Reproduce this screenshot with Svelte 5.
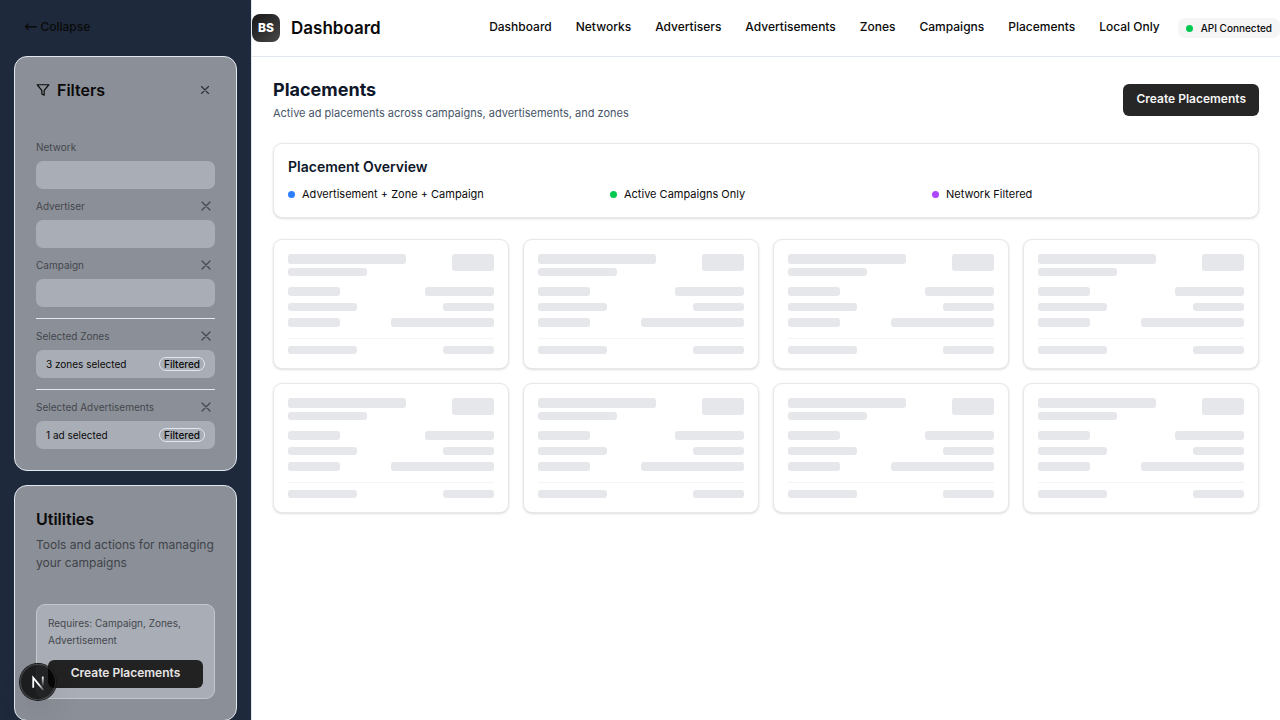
<script>
  const links = ['Dashboard', 'Networks', 'Advertisers', 'Advertisements', 'Zones', 'Campaigns', 'Placements', 'Local Only'];
  const filters = [
    { id: 'network', label: 'Network', clearable: false },
    { id: 'advertiser', label: 'Advertiser', clearable: true },
    { id: 'campaign', label: 'Campaign', clearable: true }
  ];
  const selections = [
    { label: 'Selected Zones', text: '3 zones selected' },
    { label: 'Selected Advertisements', text: '1 ad selected' }
  ];
  const overview = [
    { text: 'Advertisement + Zone + Campaign', tone: 'blue' },
    { text: 'Active Campaigns Only', tone: 'green' },
    { text: 'Network Filtered', tone: 'purple' }
  ];
  const placeholders = Array.from({ length: 8 }, (_, i) => i);
</script>

{#snippet cross()}
  <svg class="cross" viewBox="0 0 24 24" aria-hidden="true"><path d="M18 6 6 18M6 6l12 12" /></svg>
{/snippet}

<div class="shell">
  <aside>
    <button class="collapse"><span class="arrow">←</span>Collapse</button>

    <section class="panel">
      <div class="panel-head">
        <svg class="funnel" viewBox="0 0 24 24" aria-hidden="true"><path d="M22 3H2l8 9.46V19l4 2v-8.54L22 3z" /></svg>
        <h2>Filters</h2>
        <button class="icon-btn" aria-label="Clear all filters">{@render cross()}</button>
      </div>
      {#each filters as f}
        <div class="field">
          <div class="label-row">
            <label for={f.id}>{f.label}</label>
            {#if f.clearable}
              <button class="icon-btn" aria-label={'Clear ' + f.label}>{@render cross()}</button>
            {/if}
          </div>
          <select id={f.id}></select>
        </div>
      {/each}
      {#each selections as s}
        <div class="selection">
          <div class="label-row">
            <span>{s.label}</span>
            <button class="icon-btn" aria-label={'Clear ' + s.label}>{@render cross()}</button>
          </div>
          <div class="chosen">
            <span>{s.text}</span>
            <span class="tag">Filtered</span>
          </div>
        </div>
      {/each}
    </section>

    <section class="panel utilities">
      <h2>Utilities</h2>
      <p class="lead">Tools and actions for managing your campaigns</p>
      <div class="tool">
        <p>Requires: Campaign, Zones, Advertisement</p>
        <button class="primary small">Create Placements</button>
      </div>
    </section>
  </aside>

  <div class="page">
    <header>
      <div class="brand">
        <span class="logo">BS</span>
        <span class="name">Dashboard</span>
      </div>
      <div class="right">
        <nav>
          {#each links as link}
            <a href="#top">{link}</a>
          {/each}
        </nav>
        <span class="status"><i class="dot green"></i>API Connected</span>
      </div>
    </header>

    <main>
      <div class="title-row">
        <div>
          <h1>Placements</h1>
          <p>Active ad placements across campaigns, advertisements, and zones</p>
        </div>
        <button class="primary">Create Placements</button>
      </div>

      <section class="card">
        <h3>Placement Overview</h3>
        <ul>
          {#each overview as o}
            <li><i class="dot {o.tone}"></i>{o.text}</li>
          {/each}
        </ul>
      </section>

      <div class="grid">
        {#each placeholders as p (p)}
          <div class="card">
            <div class="top">
              <div class="headings">
                <i class="bar tall w75"></i>
                <i class="bar short w50"></i>
              </div>
              <i class="bar badge"></i>
            </div>
            <div class="rows">
              <div><i class="bar w25"></i><i class="bar w33"></i></div>
              <div><i class="bar short w33"></i><i class="bar short w25"></i></div>
              <div><i class="bar w25"></i><i class="bar w50"></i></div>
            </div>
            <div class="foot"><i class="bar short w33"></i><i class="bar short w25"></i></div>
          </div>
        {/each}
      </div>
    </main>
  </div>

  <button class="dev" aria-label="Open developer tools">
    <svg viewBox="0 0 40 40" aria-hidden="true">
      <defs>
        <linearGradient id="diag" x1="22" y1="22" x2="27" y2="29" gradientUnits="userSpaceOnUse">
          <stop stop-color="#fff" /><stop offset="1" stop-color="#fff" stop-opacity="0.1" />
        </linearGradient>
        <linearGradient id="stem" x1="25" y1="14" x2="25" y2="25" gradientUnits="userSpaceOnUse">
          <stop stop-color="#fff" /><stop offset="1" stop-color="#fff" stop-opacity="0" />
        </linearGradient>
      </defs>
      <path d="M14.700 26.500V15.200L26 29" fill="none" stroke="url(#diag)" stroke-width="2" />
      <path d="M25.300 14V24.500" fill="none" stroke="url(#stem)" stroke-width="2" />
    </svg>
  </button>
</div>

<style>
  :global(body) {
    margin: 0;
    background: #fff;
    color: #0a0a0a;
    font-family: Inter, "Liberation Sans", sans-serif;
  }
  * { box-sizing: border-box; }
  h1, h2, h3, p, ul { margin: 0; padding: 0; }
  button { font: inherit; color: inherit; border: 0; background: none; padding: 0; cursor: pointer; }

  .shell { display: flex; height: 100vh; overflow: hidden; }

  aside {
    flex: 0 0 252px;
    padding: 14px;
    background: #1e293b;
    border-right: 1px solid #e2e8f0;
    overflow: hidden;
  }
  .collapse {
    display: flex;
    align-items: center;
    gap: 3px;
    height: 28px;
    margin-bottom: 14px;
    padding: 0 10px 2px;
    font-size: 12px;
    line-height: 16px;
    font-weight: 500;
    color: #0a0a0a;
  }
  .arrow { font-family: "DejaVu Sans", sans-serif; font-size: 16px; font-weight: 400; }
  .panel {
    padding: 21px;
    border: 1px solid #e2e8f0;
    border-radius: 13px;
    background: #8b8f97;
  }
  .panel h2 { font-size: 16px; line-height: 24px; font-weight: 600; }
  .panel-head { display: flex; align-items: center; height: 24px; margin-bottom: 36px; gap: 7px; }
  .panel-head .icon-btn { margin-left: auto; width: 21px; }
  .funnel { width: 14px; height: 14px; }
  .funnel, .cross { fill: none; stroke: currentColor; stroke-width: 2; stroke-linecap: round; stroke-linejoin: round; }
  .cross { width: 14px; height: 14px; }
  .label-row .cross { width: 16px; height: 16px; stroke-width: 1.8; }
  .icon-btn { display: flex; align-items: center; justify-content: center; width: 18px; height: 18px; color: #2c3036; }
  .label-row .icon-btn { color: #43474e; }
  .field + .field { margin-top: 8px; }
  .label-row {
    display: flex;
    align-items: center;
    justify-content: space-between;
    height: 18px;
    margin-bottom: 5px;
    font-size: 10px;
    color: #43474e;
  }
  select {
    display: block;
    width: 100%;
    height: 28px;
    border: 0;
    border-radius: 7px;
    background: #a9adb5;
    appearance: none;
  }
  .selection { margin-top: 11px; padding-top: 8px; border-top: 1px solid #e2e8f0; }
  .chosen {
    display: flex;
    align-items: center;
    justify-content: space-between;
    height: 28px;
    padding: 0 10px;
    border-radius: 7px;
    background: #a9adb5;
    font-size: 10px;
  }
  .tag {
    height: 14px;
    padding: 0 4px;
    border: 1px solid #e2e8f0;
    border-radius: 7px;
    line-height: 12px;
    font-weight: 500;
  }
  .utilities { margin-top: 14px; }
  .lead { margin-top: 5px; font-size: 12px; line-height: 18px; color: #3f434a; }
  .tool {
    margin-top: 32px;
    padding: 10px 11px;
    border: 1px solid #c3c7cd;
    border-radius: 9px;
    background: #a9adb5;
  }
  .tool p { margin-bottom: 11px; font-size: 10px; line-height: 17px; color: #43474e; }

  .primary {
    height: 32px;
    padding: 0 13px 3px;
    border-radius: 6px;
    background: #262626;
    color: #f5f5f5;
    font-size: 12px;
    font-weight: 600;
    white-space: nowrap;
  }
  .primary.small { width: 100%; height: 28px; background: #222; color: #e5e5e5; }

  .page { flex: 1; min-width: 0; }
  header {
    display: flex;
    align-items: center;
    justify-content: space-between;
    height: 57px;
    border-bottom: 1px solid #e2e8f0;
  }
  .brand, .right, nav, .status { display: flex; align-items: center; }
  .brand { gap: 11px; }
  .logo {
    display: grid;
    place-items: center;
    width: 28px;
    height: 28px;
    padding-bottom: 2px;
    border-radius: 8px;
    background: linear-gradient(135deg, #171717, #474747);
    color: #fff;
    font-size: 12px;
    font-weight: 800;
  }
  .name { font-size: 17px; font-weight: 600; }
  .right { gap: 18px; }
  nav { gap: 24px; padding-bottom: 3px; }
  nav a { color: inherit; text-decoration: none; font-size: 12px; font-weight: 500; white-space: nowrap; }
  .status {
    height: 20px;
    padding: 0 8px;
    gap: 8px;
    border-radius: 7px;
    background: #f5f5f5;
    font-size: 10px;
    font-weight: 500;
    white-space: nowrap;
  }
  .dot { flex: none; width: 7px; height: 7px; border-radius: 50%; }
  .blue { background: #2b7fff; }
  .green { background: #00c950; }
  .purple { background: #ad46ff; }

  main { padding: 21px; }
  .title-row { display: flex; align-items: center; justify-content: space-between; margin-bottom: 21px; }
  h1 { font-size: 18px; line-height: 24px; font-weight: 700; color: #0f172a; }
  .title-row p { margin-top: 3px; font-size: 11px; line-height: 17px; color: #475569; }
  .card {
    padding: 14px;
    border: 1px solid #e5e7eb;
    border-radius: 9px;
    background: #fff;
    box-shadow: 0 1px 3px rgb(0 0 0 / 0.1), 0 1px 2px -1px rgb(0 0 0 / 0.1);
  }
  h3 { font-size: 14px; line-height: 18px; font-weight: 600; color: #0f172a; }
  ul { display: grid; grid-template-columns: repeat(3, 1fr); gap: 10px; margin-top: 10px; list-style: none; }
  li { display: flex; align-items: center; gap: 7px; font-size: 11px; line-height: 17px; }

  .grid { display: grid; grid-template-columns: repeat(4, 1fr); gap: 14px; margin-top: 21px; }
  .bar { display: block; height: 9px; border-radius: 3px; background: #e5e7eb; }
  .tall { height: 10px; }
  .short { height: 8px; }
  .badge { width: 42px; height: 17px; }
  .w75 { width: 75%; }
  .w50 { width: 50%; }
  .w33 { width: 33.333%; }
  .w25 { width: 25%; }
  .top { display: flex; gap: 7px; }
  .headings { flex: 1; display: grid; gap: 4px; }
  .rows { display: grid; gap: 7px; margin-top: 11px; }
  .rows > div, .foot { display: flex; justify-content: space-between; }
  .foot { margin-top: 11px; padding-top: 7px; border-top: 1px solid #f3f4f6; }

  .dev {
    position: fixed;
    left: 20px;
    bottom: 20px;
    width: 36px;
    height: 36px;
    border-radius: 50%;
    background: rgb(0 0 0 / 0.8);
    box-shadow: 0 0 0 1px #171717, inset 0 0 0 1px rgb(255 255 255 / 0.14), 0 16px 32px -8px rgb(0 0 0 / 0.24);
  }
  .dev svg { display: block; width: 36px; height: 36px; }
</style>
